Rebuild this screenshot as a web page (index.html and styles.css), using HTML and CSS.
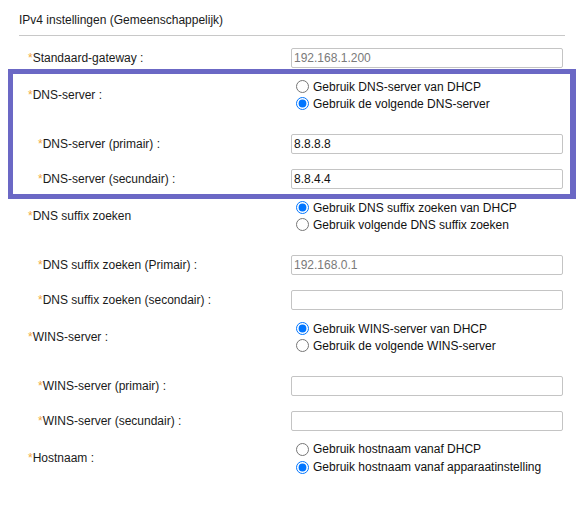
FILE: index.html
```html
<!DOCTYPE html>
<html lang="nl">
<head>
<meta charset="utf-8">
<title>IPv4 instellingen</title>
<link rel="stylesheet" href="styles.css">
</head>
<body>
<div class="page">
  <div class="title">IPv4 instellingen (Gemeenschappelijk)</div>

  <div class="row row-gateway">
    <div class="label"><span class="req">*</span>Standaard-gateway :</div>
    <input class="field disabled" type="text" value="192.168.1.200" readonly>
  </div>

  <div class="highlight">
    <div class="row row-radio">
      <div class="label"><span class="req">*</span>DNS-server :</div>
      <div class="radios">
        <label class="opt"><input type="radio" name="dns">Gebruik DNS-server van DHCP</label>
        <label class="opt"><input type="radio" name="dns" checked>Gebruik de volgende DNS-server</label>
      </div>
    </div>
    <div class="row sub first">
      <div class="label"><span class="req">*</span>DNS-server (primair) :</div>
      <input class="field" type="text" value="8.8.8.8">
    </div>
    <div class="row sub">
      <div class="label"><span class="req">*</span>DNS-server (secundair) :</div>
      <input class="field" type="text" value="8.8.4.4">
    </div>
  </div>

  <div class="row row-radio flush">
    <div class="label"><span class="req">*</span>DNS suffix zoeken</div>
    <div class="radios">
      <label class="opt"><input type="radio" name="suffix" checked>Gebruik DNS suffix zoeken van DHCP</label>
      <label class="opt"><input type="radio" name="suffix">Gebruik volgende DNS suffix zoeken</label>
    </div>
  </div>
  <div class="row sub first">
    <div class="label"><span class="req">*</span>DNS suffix zoeken (Primair) :</div>
    <input class="field disabled" type="text" value="192.168.0.1" readonly>
  </div>
  <div class="row sub">
    <div class="label"><span class="req">*</span>DNS suffix zoeken (secondair) :</div>
    <input class="field" type="text" value="">
  </div>

  <div class="row row-radio after-sub">
    <div class="label"><span class="req">*</span>WINS-server :</div>
    <div class="radios">
      <label class="opt"><input type="radio" name="wins" checked>Gebruik WINS-server van DHCP</label>
      <label class="opt"><input type="radio" name="wins">Gebruik de volgende WINS-server</label>
    </div>
  </div>
  <div class="row sub first">
    <div class="label"><span class="req">*</span>WINS-server (primair) :</div>
    <input class="field" type="text" value="">
  </div>
  <div class="row sub">
    <div class="label"><span class="req">*</span>WINS-server (secundair) :</div>
    <input class="field" type="text" value="">
  </div>

  <div class="row row-radio after-sub host">
    <div class="label"><span class="req">*</span>Hostnaam :</div>
    <div class="radios tall">
      <label class="opt"><input type="radio" name="host">Gebruik hostnaam vanaf DHCP</label>
      <label class="opt"><input type="radio" name="host" checked>Gebruik hostnaam vanaf apparaatinstelling</label>
    </div>
  </div>
</div>
</body>
</html>
```

FILE: styles.css
```css
* { box-sizing: border-box; }

html, body {
  margin: 0;
  padding: 0;
  background: #ffffff;
}

body {
  font-family: "Liberation Sans", Arial, sans-serif;
  font-size: 12px;
  color: #1a1a1a;
}

.page {
  width: 582px;
  height: 514px;
  display: flex;
  flex-direction: column;
}

.title {
  margin: 0 17px 0 19px;
  padding: 13px 0 7px 0;
  line-height: 15px;
  border-bottom: 1px solid #c8c8c8;
  color: #1a1a1a;
}

.row {
  display: grid;
  grid-template-columns: 263px 272px;
  align-items: center;
  padding-left: 28px;
}

.label {
  line-height: 15px;
  white-space: nowrap;
}

.req {
  color: #f2a93b;
}

.row-gateway {
  margin-top: 12px;
}

.field {
  width: 272px;
  height: 20px;
  margin: 0;
  padding: 0 2px;
  border: 1px solid #c4c4c4;
  border-radius: 2px;
  font-family: "Liberation Sans", Arial, sans-serif;
  font-size: 12px;
  color: #111111;
  background: #ffffff;
  outline: none;
}

.field.disabled {
  color: #7a7a7a;
}

.highlight {
  margin: 1px 0 0 8px;
  width: 568px;
  border: 5px solid #6b68c5;
  border-right-width: 6px;
  padding: 4px 0 5px 0;
}

.highlight .row {
  padding-left: 15px;
}

.radios {
  display: flex;
  flex-direction: column;
}

.opt {
  display: flex;
  align-items: center;
  height: 17px;
  white-space: nowrap;
  color: #111111;
}

.radios.tall .opt {
  height: 18px;
}

.opt input {
  width: 13px;
  height: 13px;
  margin: 0 4px 0 5px;
  flex: none;
}

.row.sub .label {
  padding-left: 10px;
}

.row.sub {
  margin-top: 15px;
}

.row.sub.first {
  margin-top: 22px;
}

.row.flush {
  margin-top: 0;
}

.row.after-sub {
  margin-top: 10px;
}

.row.host {
  margin-top: 9px;
}
```
